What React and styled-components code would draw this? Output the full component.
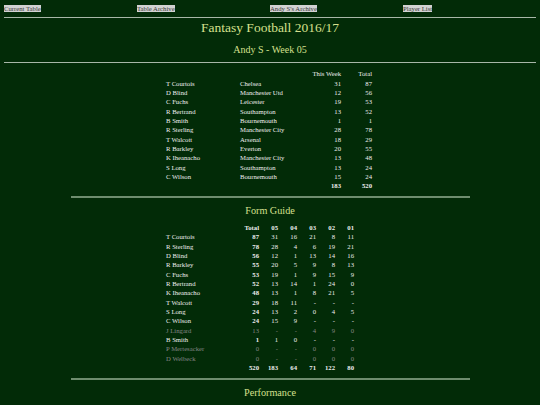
import React from "react";
import styled, { createGlobalStyle } from "styled-components";

const squad = [
  ["T Courtois", "Chelsea", 31, 87],
  ["D Blind", "Manchester Utd", 12, 56],
  ["C Fuchs", "Leicester", 19, 53],
  ["R Bertrand", "Southampton", 13, 52],
  ["B Smith", "Bournemouth", 1, 1],
  ["R Sterling", "Manchester City", 28, 78],
  ["T Walcott", "Arsenal", 18, 29],
  ["R Barkley", "Everton", 20, 55],
  ["K Iheanacho", "Manchester City", 13, 48],
  ["S Long", "Southampton", 13, 24],
  ["C Wilson", "Bournemouth", 15, 24],
];

const form = [
  ["T Courtois", 87, ["31", "16", "21", "8", "11"]],
  ["R Sterling", 78, ["28", "4", "6", "19", "21"]],
  ["D Blind", 56, ["12", "1", "13", "14", "16"]],
  ["R Barkley", 55, ["20", "5", "9", "8", "13"]],
  ["C Fuchs", 53, ["19", "1", "9", "15", "9"]],
  ["R Bertrand", 52, ["13", "14", "1", "24", "0"]],
  ["K Iheanacho", 48, ["13", "1", "8", "21", "5"]],
  ["T Walcott", 29, ["18", "11", "-", "-", "-"]],
  ["S Long", 24, ["13", "2", "0", "4", "5"]],
  ["C Wilson", 24, ["15", "9", "-", "-", "-"]],
  ["J Lingard", 13, ["-", "-", "4", "9", "0"], true],
  ["B Smith", 1, ["1", "0", "-", "-", "-"]],
  ["P Mertesacker", 0, ["-", "-", "0", "0", "0"], true],
  ["D Welbeck", 0, ["-", "-", "0", "0", "0"], true],
];

const weeks = ["05", "04", "03", "02", "01"];
const weekTotals = [183, 64, 71, 122, 80];

const GlobalStyle = createGlobalStyle`
  html, body {
    margin: 0;
    background: #022b07;
  }
  body {
    font-family: "Liberation Serif", "Times New Roman", serif;
    color: #eeeeee;
  }
`;

const Page = styled.div`
  padding: 4px 4px 0;
`;

const Nav = styled.nav`
  display: grid;
  grid-template-columns: repeat(4, 1fr);
  align-items: center;
  height: 9px;
`;

const NavLink = styled.a`
  justify-self: start;
  background: #d2d2d2;
  color: #3a3a3a;
  font-size: 6.7px;
  line-height: 7px;
  text-decoration: none;
  white-space: nowrap;
`;

const Rule = styled.hr`
  border: 0;
  margin: ${(p) => p.$gap}px auto 0;
  width: ${(p) => (p.$short ? "75%" : "100%")};
  height: ${(p) => (p.$short ? 2 : 1)}px;
  background: ${(p) => (p.$short ? "#6e8d6e" : "#a8b7a8")};
`;

const Title = styled.h1`
  margin: 3.3px 0 0;
  text-align: center;
  font-size: 13.5px;
  line-height: 14px;
  font-weight: normal;
  color: #d6e08e;
`;

const Subtitle = styled.h2`
  margin: 9.2px 0 0;
  text-align: center;
  font-size: 10px;
  line-height: 11px;
  font-weight: normal;
  color: #d6e08e;
`;

const SectionTitle = styled.h3`
  margin: 6.9px 0 0;
  text-align: center;
  font-size: 10.2px;
  line-height: 11px;
  font-weight: normal;
  color: #d6e08e;
`;

const Holder = styled.div`
  width: 208px;
  margin: ${(p) => p.$gap}px auto 0;
`;

const Table = styled.table`
  border-collapse: collapse;
  table-layout: fixed;
  font-size: 6.7px;
`;

const Col = styled.col`
  width: ${(p) => p.$w}px;
`;

const Row = styled.tr`
  height: 9.33px;
  color: ${(p) => (p.$muted ? "#858585" : "#eeeeee")};
`;

const Cell = styled.td`
  padding: 0;
  line-height: 9.33px;
  white-space: nowrap;
  text-align: ${(p) => (p.$right ? "right" : "left")};
  font-weight: ${(p) => (p.$bold ? "bold" : "normal")};
`;

export default function App() {
  return (
    <>
      <GlobalStyle />
      <Page>
        <Nav>
          <NavLink href="#">Current Table</NavLink>
          <NavLink href="#">Table Archive</NavLink>
          <NavLink href="#">Andy S's Archive</NavLink>
          <NavLink href="#">Player List</NavLink>
        </Nav>
        <Rule $gap={4} />
        <Title>Fantasy Football 2016/17</Title>
        <Subtitle>Andy S - Week 05</Subtitle>
        <Rule $gap={6.5} />

        <Holder $gap={6.3}>
          <Table>
            <colgroup>
              <Col $w={74} />
              <Col $w={70} />
              <Col $w={31} />
              <Col $w={31} />
            </colgroup>
            <tbody>
              <Row>
                <Cell />
                <Cell />
                <Cell $right>This Week</Cell>
                <Cell $right>Total</Cell>
              </Row>
              {squad.map(([name, club, week, total]) => (
                <Row key={name}>
                  <Cell>{name}</Cell>
                  <Cell>{club}</Cell>
                  <Cell $right>{week}</Cell>
                  <Cell $right>{total}</Cell>
                </Row>
              ))}
              <Row>
                <Cell />
                <Cell />
                <Cell $right $bold>183</Cell>
                <Cell $right $bold>520</Cell>
              </Row>
            </tbody>
          </Table>
        </Holder>

        <Rule $short $gap={5.7} />
        <SectionTitle>Form Guide</SectionTitle>

        <Holder $gap={6.8}>
          <Table>
            <colgroup>
              <Col $w={74} />
              {[0, 1, 2, 3, 4, 5].map((i) => (
                <Col key={i} $w={19} />
              ))}
            </colgroup>
            <tbody>
              <Row>
                <Cell />
                <Cell $right $bold>Total</Cell>
                {weeks.map((w) => (
                  <Cell key={w} $right $bold>{w}</Cell>
                ))}
              </Row>
              {form.map(([name, total, pts, muted]) => (
                <Row key={name} $muted={muted}>
                  <Cell>{name}</Cell>
                  <Cell $right $bold={!muted}>{total}</Cell>
                  {pts.map((p, i) => (
                    <Cell key={i} $right>{p}</Cell>
                  ))}
                </Row>
              ))}
              <Row>
                <Cell />
                <Cell $right $bold>520</Cell>
                {weekTotals.map((t, i) => (
                  <Cell key={i} $right $bold>{t}</Cell>
                ))}
              </Row>
            </tbody>
          </Table>
        </Holder>

        <Rule $short $gap={5.7} />
        <SectionTitle>Performance</SectionTitle>
      </Page>
    </>
  );
}
